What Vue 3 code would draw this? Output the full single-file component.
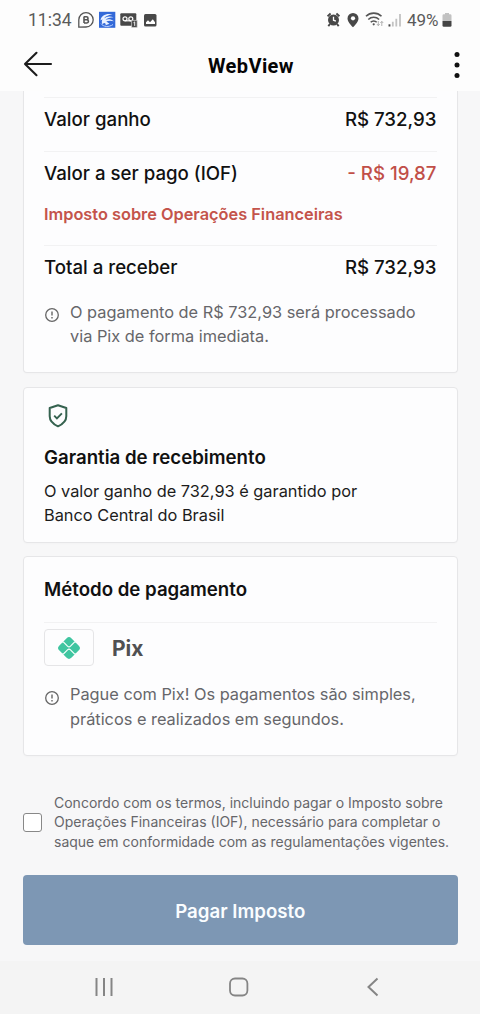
<script setup>
import { ref } from 'vue'

const agreed = ref(false)
</script>

<template>
  <div class="screen">
    <div class="status">
      <span class="clock">11:34</span>
      <svg class="notif" width="80" height="18" viewBox="0 0 80 18">
        <path d="M.8 16.200V8.800A7.200 7.200 0 1 1 8 16z" fill="none" stroke="#555" stroke-width="1.300" />
        <path d="M6 5.500v6.600M6 5.700h2.500a1.500 1.500 0 0 1 0 3H6h2.800a1.600 1.600 0 0 1 0 3.300H6" fill="none" stroke="#555" stroke-width="1.600" />
        <rect x="21" y="0.800" width="16.300" height="16" fill="#3369d8" />
        <path d="M22.500 9.500C23 4.500 28 2 34.500 3.300C31 4 27.500 5 26 7.500C28.500 5.300 32 4.700 35.500 6.300C32 6.300 29 7.200 27.500 8.800C30 7.700 33.500 8 36 10.300C33 9.600 30 9.600 28.300 10.600L31.500 12.800L27.500 14.300C28.500 12.500 26 11 24.700 13.200C23.500 12 23.500 10.500 24.500 8.300Z" fill="#e9f1ff" />
        <path d="M23 12.500c2 3.500 8 4 12 1" fill="none" stroke="#bcd2ff" stroke-width="1" />
        <rect x="42.300" y="2.300" width="16" height="12.500" rx="1" fill="#484848" />
        <path d="M47.200 9.800H53" stroke="#fff" stroke-width="1.200" />
        <circle cx="47" cy="7.800" r="2" fill="none" stroke="#fff" stroke-width="1.200" />
        <circle cx="52.800" cy="7.800" r="2" fill="none" stroke="#fff" stroke-width="1.200" />
        <rect x="53.700" y="9.300" width="5.400" height="7" fill="#484848" stroke="#ccc" stroke-width=".7" />
        <path d="M55.500 11.700l1.200-.8v4" fill="none" stroke="#fff" stroke-width=".9" />
        <rect x="66" y="2.900" width="12.500" height="12.700" rx="1.500" fill="#484848" />
        <path d="M68 13v-1.700l2-2 2 1.900 2.800-2.900 2.200 2.900V13z" fill="#fff" />
      </svg>
      <svg class="indicators" width="80" height="18" viewBox="0 0 80 18">
        <circle cx="6.500" cy="9" r="5.500" fill="#484848" />
        <path d="M.6 5.300 3.600 2.500M12.400 5.300 9.400 2.500M3 13 1.300 15.200M10 13l1.700 2.200" stroke="#484848" stroke-width="1.900" />
        <path d="M6.500 5.800v3.400l2.400 1" fill="none" stroke="#fff" stroke-width="1.300" />
        <path d="M26 2a5.500 5.500 0 0 0-5.500 5.500C20.500 11.400 26 16.200 26 16.200s5.500-4.800 5.500-8.700A5.500 5.500 0 0 0 26 2z" fill="#484848" />
        <circle cx="26" cy="7.300" r="2.100" fill="#fff" />
        <path d="M39 5.300a11 11 0 0 1 15.500 0M41.300 8.500a7.600 7.600 0 0 1 10.800 0M43.700 11.300a4.200 4.200 0 0 1 6 0" fill="none" stroke="#555" stroke-width="1.600" />
        <circle cx="46.700" cy="13.300" r="1.100" fill="#555" />
        <path d="M51.300 10v4.500M49.900 13l1.400 1.700 1.400-1.700M54.800 15v-4.500M53.400 12l1.400-1.700 1.400 1.700" fill="none" stroke="#aaa" stroke-width=".9" />
        <rect x="61.500" y="13.300" width="1.900" height="2.200" fill="#484848" />
        <path d="M65.800 10.800v4.700M69.300 7.800v7.700M73 3v12.500" stroke="#c2c2c2" stroke-width="1.800" />
      </svg>
      <span class="percent">49%</span>
      <svg class="battery" width="10" height="16" viewBox="0 0 10 16">
        <path d="M3 1h4v1.300h1.200q1.300 0 1.300 1.200V9H.5V3.500q0-1.200 1.300-1.200H3z" fill="#c2c2c2" />
        <path d="M.5 9h9v4.500q0 1.200-1.300 1.200H1.800Q.5 14.700.5 13.500z" fill="#444" />
      </svg>
    </div>

    <header class="bar">
      <svg class="back" width="30" height="26" viewBox="0 0 30 26">
        <path d="M28 13H2M13.500 1.800 2 13l11.500 11.200" fill="none" stroke="#1c1c1c" stroke-width="2.100" stroke-linecap="round" stroke-linejoin="round" />
      </svg>
      <h1 class="title">WebView</h1>
      <svg class="more" width="6" height="28" viewBox="0 0 6 28">
        <circle cx="3" cy="3.400" r="2.500" />
        <circle cx="3" cy="14" r="2.500" />
        <circle cx="3" cy="24.600" r="2.500" />
      </svg>
    </header>

    <main class="content">
      <section class="card summary">
        <div class="row first"><span>Valor ganho</span><span class="amount">R$ 732,93</span></div>
        <div class="row tax"><span class="tax-label">Valor a ser pago (IOF)</span><span class="amount red">- R$ 19,87</span></div>
        <div class="tax-name">Imposto sobre Operações Financeiras</div>
        <div class="row total"><span>Total a receber</span><span class="amount">R$ 732,93</span></div>
        <div class="info">
          <svg class="info-icon" width="16" height="16" viewBox="0 0 16 16">
            <circle cx="8" cy="8" r="6.300" fill="none" stroke="#666" stroke-width="1.300" />
            <path d="M8 4.600v4M8 10v1.500" stroke="#666" stroke-width="1.400" />
          </svg>
          <p class="note">O pagamento de R$ 732,93 será processado<br>via Pix de forma imediata.</p>
        </div>
      </section>

      <section class="card guarantee">
        <svg class="shield" width="22" height="26" viewBox="0 0 22 26">
          <path d="M11 2.200 19.300 5v8.200c0 4.800-3.300 7.800-8.300 10.100C6 21 2.700 18 2.700 13.200V5z" fill="none" stroke="#35624f" stroke-width="2" stroke-linejoin="round" />
          <path d="M7.200 12.700l2.700 2.700 5-5" fill="none" stroke="#35624f" stroke-width="1.900" />
        </svg>
        <h2 class="heading">Garantia de recebimento</h2>
        <p class="body">O valor ganho de 732,93 é garantido por<br>Banco Central do Brasil</p>
      </section>

      <section class="card method">
        <h2 class="heading">Método de pagamento</h2>
        <div class="pix-row">
          <div class="pix-box">
            <svg width="24" height="24" viewBox="0 0 24 24">
              <rect x="3.400" y="3.400" width="17.200" height="17.200" rx="3.300" transform="rotate(45 12 12)" fill="#3fc5a0" />
              <path d="M4.500 6H6.500L10.500 10.200Q12 11.700 13.500 10.200L17.500 6H19.500M4.500 18H6.500L10.500 13.800Q12 12.300 13.500 13.800L17.500 18H19.500" fill="none" stroke="#f4fffb" stroke-width="1.200" />
            </svg>
          </div>
          <span class="pix-name">Pix</span>
        </div>
        <div class="info">
          <svg class="info-icon" width="16" height="16" viewBox="0 0 16 16">
            <circle cx="8" cy="8" r="6.300" fill="none" stroke="#666" stroke-width="1.300" />
            <path d="M8 4.600v4M8 10v1.500" stroke="#666" stroke-width="1.400" />
          </svg>
          <p class="note">Pague com Pix! Os pagamentos são simples,<br>práticos e realizados em segundos.</p>
        </div>
      </section>

      <label class="terms">
        <input v-model="agreed" class="check" type="checkbox">
        <span class="terms-text">Concordo com os termos, incluindo pagar o Imposto sobre<br>Operações Financeiras (IOF), necessário para completar o<br>saque em conformidade com as regulamentações vigentes.</span>
      </label>
      <button class="pay" type="button">Pagar Imposto</button>
    </main>

    <nav class="nav">
      <svg width="20" height="20" viewBox="0 0 20 20"><path d="M2.500 1v18M10 1v18M17.500 1v18" stroke="#858585" stroke-width="2" /></svg>
      <svg width="20" height="20" viewBox="0 0 20 20"><rect x="1" y="1.500" width="17.400" height="17" rx="5" fill="none" stroke="#858585" stroke-width="1.800" /></svg>
      <svg width="20" height="20" viewBox="0 0 20 20"><path d="M14.500 1.500 5.500 10l9 8.500" fill="none" stroke="#858585" stroke-width="2" /></svg>
    </nav>
  </div>
</template>

<style>
html, body { margin: 0; background: #f7f7f8; }
</style>

<style scoped>
* { box-sizing: border-box; margin: 0; }
svg { display: block; flex: none; }
.screen { width: 480px; height: 1014px; display: flex; flex-direction: column; overflow: hidden; background: #f7f7f8; color: #111; font-family: Inter, "Liberation Sans", sans-serif; white-space: nowrap; }
.status { flex: none; height: 40px; display: flex; align-items: center; padding-left: 28px; background: #fdfdfd; font: 17.500px/40px Roboto, sans-serif; color: #5a5a5a; }
.clock { width: 50px; }
.indicators { margin-left: 169px; }
.percent { width: 34px; font-size: 17px; }
.battery { margin-left: 1px; }
.bar { flex: none; height: 51px; display: flex; align-items: center; padding: 0 20px 0 23px; background: #fdfdfd; }
.back { margin-bottom: 3px; }
.title { flex: 1; padding: 1px 0 0 155px; font: 700 20px/51px Roboto, sans-serif; letter-spacing: .4px; color: #050505; }
.more { fill: #111; margin-bottom: 1px; }
.content { flex: 1; padding: 0 22.500px 0 23px; }
.card { border: 1px solid #e6e6e8; border-radius: 4px; background: #fdfdfe; padding: 0 20px; box-shadow: 0 1px 2px rgba(0, 0, 0, .02); }
.summary { height: 282px; border-top: 0; border-radius: 0 0 4px 4px; padding-top: 6px; }
.row { display: flex; justify-content: space-between; border-top: 1px solid #f2f2f3; font-size: 18.670px; font-weight: 500; line-height: 24px; }
.first { height: 54px; padding-top: 10px; }
.tax { height: 52px; padding-top: 10px; }
.red { color: #c14f48; }
.tax-name { height: 42px; line-height: 23px; font-size: 16.330px; font-weight: 600; color: #c4544b; }
.total { height: 55px; padding-top: 10px; }
.info { display: flex; }
.info-icon { margin-top: 7px; }
.note { margin-left: 10px; font-size: 16.330px; line-height: 24px; color: #66666a; }
.guarantee { height: 156px; margin-top: 14px; padding-top: 15px; }
.shield { margin-left: 3px; }
.heading { font-size: 18.670px; font-weight: 600; line-height: 24px; }
.guarantee .heading { margin-top: 17px; }
.body { margin-top: 9px; font-size: 16.330px; line-height: 24px; color: #1c1c1c; }
.method { height: 200px; margin-top: 13px; padding-top: 21px; }
.method .note { line-height: 25px; }
.pix-row { height: 60px; margin-top: 20px; padding-top: 6px; border-top: 1px solid #f2f2f3; display: flex; }
.method .info-icon { margin-top: 8px; }
.pix-box { width: 50px; height: 37px; display: grid; place-items: center; border: 1px solid #e5e5e7; border-radius: 4px; }
.pix-name { margin-left: 18px; font-size: 21px; font-weight: 700; line-height: 39px; color: #505052; }
.terms { display: flex; align-items: center; height: 59px; margin-top: 37px; font-size: 14px; line-height: 19.600px; color: #66666a; }
.terms-text { margin-top: -1px; }
.check { appearance: none; flex: none; width: 19px; height: 19px; margin: 0 12px 0 0; border: 1.500px solid #888; border-radius: 3px; background: #fff; }
.pay { display: block; width: 100%; height: 70px; margin-top: 23px; border: 0; border-radius: 4px; background: #7d97b4; color: #fafdff; font: 600 18.670px/70px Inter, sans-serif; padding: 2px 0 0; }
.nav { flex: none; height: 53px; display: flex; justify-content: space-between; align-items: center; padding: 0 97px 1px 94px; background: #f4f4f4; }
</style>
